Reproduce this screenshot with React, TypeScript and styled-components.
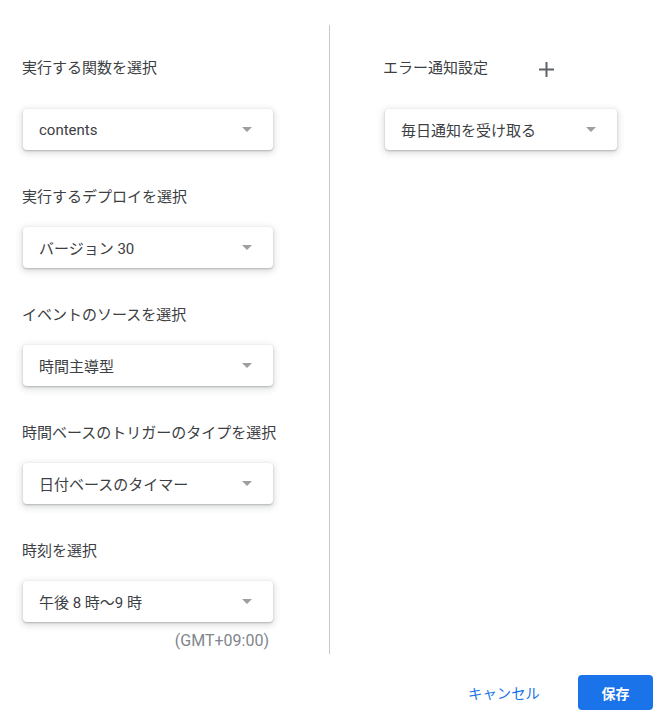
import React from "react";
import styled, { createGlobalStyle } from "styled-components";

const Global = createGlobalStyle`
  html, body { margin: 0; padding: 0; background: #fff; }
  body { font-family: Roboto, "Noto Sans CJK JP", sans-serif; color: #3c4043; }
  * { box-sizing: border-box; }
`;

const Page = styled.div`
  width: 670px;
  height: 725px;
  display: flex;
  flex-direction: column;
`;

const Columns = styled.div`
  display: flex;
  flex-direction: row;
  margin-top: 25px;
`;

const LeftCol = styled.div`
  width: 330px;
  border-right: 1px solid #c8c8c8;
  padding: 33px 0 3px 22px;
  display: flex;
  flex-direction: column;
`;

const RightCol = styled.div`
  flex: 1;
  padding: 33px 0 0 53px;
  display: flex;
  flex-direction: column;
`;

const Group = styled.div<{ $first?: boolean }>`
  display: flex;
  flex-direction: column;
  gap: ${(p) => (p.$first ? 31 : 20)}px;
  & + & { margin-top: 37px; }
`;

const Label = styled.div`
  font-size: 15px;
  line-height: 20px;
  height: 20px;
  color: #3c4043;
  white-space: nowrap;
`;

const LabelRow = styled.div`
  display: flex;
  align-items: center;
  height: 20px;
`;

const PlusButton = styled.button`
  border: none;
  background: none;
  padding: 0;
  margin-left: 51px;
  width: 15px;
  height: 15px;
  display: flex;
  align-items: center;
  justify-content: center;
  cursor: pointer;
  margin-top: 3px;
`;

const SelectBox = styled.div<{ $width: number; $offset?: number }>`
  margin-left: ${(p) => p.$offset ?? 1}px;
  width: ${(p) => p.$width}px;
  height: 41px;
  background: #fff;
  border-radius: 4px;
  box-shadow: 0 1px 2px rgba(60, 64, 67, 0.3), 0 2px 6px 2px rgba(60, 64, 67, 0.15);
  display: flex;
  align-items: center;
  padding: 0 21px 0 16px;
`;

const SelectText = styled.span`
  flex: 1;
  font-size: 15px;
  color: #3c4043;
  white-space: nowrap;
`;

const Arrow = styled.span`
  width: 0;
  height: 0;
  border-left: 5px solid transparent;
  border-right: 5px solid transparent;
  border-top: 5px solid #9e9e9e;
`;

const TimeZone = styled.div`
  width: 251px;
  text-align: right;
  padding-right: 4px;
  font-size: 16px;
  line-height: 20px;
  margin-top: 9px;
  color: #80868b;
`;

const Footer = styled.div`
  display: flex;
  justify-content: flex-end;
  align-items: center;
  gap: 14px;
  padding-right: 17px;
  margin-top: 21px;
`;

const TextButton = styled.button`
  border: none;
  background: none;
  font-family: inherit;
  font-size: 14.4px;
  color: #1a73e8;
  padding: 0 24px;
  height: 35px;
  cursor: pointer;
`;

const PrimaryButton = styled.button`
  border: none;
  background: #1a73e8;
  color: #fff;
  font-family: inherit;
  font-size: 14px;
  font-weight: 700;
  width: 75px;
  height: 35px;
  border-radius: 4px;
  cursor: pointer;
`;

const Select = ({ value, width = 250, offset }: { value: string; width?: number; offset?: number }) => (
  <SelectBox $width={width} $offset={offset}>
    <SelectText>{value}</SelectText>
    <Arrow />
  </SelectBox>
);

const fields = [
  { label: "実行する関数を選択", value: "contents" },
  { label: "実行するデプロイを選択", value: "バージョン 30" },
  { label: "イベントのソースを選択", value: "時間主導型" },
  { label: "時間ベースのトリガーのタイプを選択", value: "日付ベースのタイマー" },
  { label: "時刻を選択", value: "午後 8 時〜9 時" },
];

export default function App() {
  return (
    <Page>
      <Global />
      <Columns>
        <LeftCol>
          {fields.map((f, i) => (
            <Group key={f.label} $first={i === 0}>
              <Label>{f.label}</Label>
              <Select value={f.value} />
            </Group>
          ))}
          <TimeZone>(GMT+09:00)</TimeZone>
        </LeftCol>
        <RightCol>
          <Group $first>
            <LabelRow>
              <Label>エラー通知設定</Label>
              <PlusButton aria-label="追加">
                <svg width="15" height="15" viewBox="0 0 15 15">
                  <path d="M7.5 0v15M0 7.5h15" stroke="#5f6368" strokeWidth="2" />
                </svg>
              </PlusButton>
            </LabelRow>
            <Select value="毎日通知を受け取る" width={232} offset={2} />
          </Group>
        </RightCol>
      </Columns>
      <Footer>
        <TextButton>キャンセル</TextButton>
        <PrimaryButton>保存</PrimaryButton>
      </Footer>
    </Page>
  );
}
